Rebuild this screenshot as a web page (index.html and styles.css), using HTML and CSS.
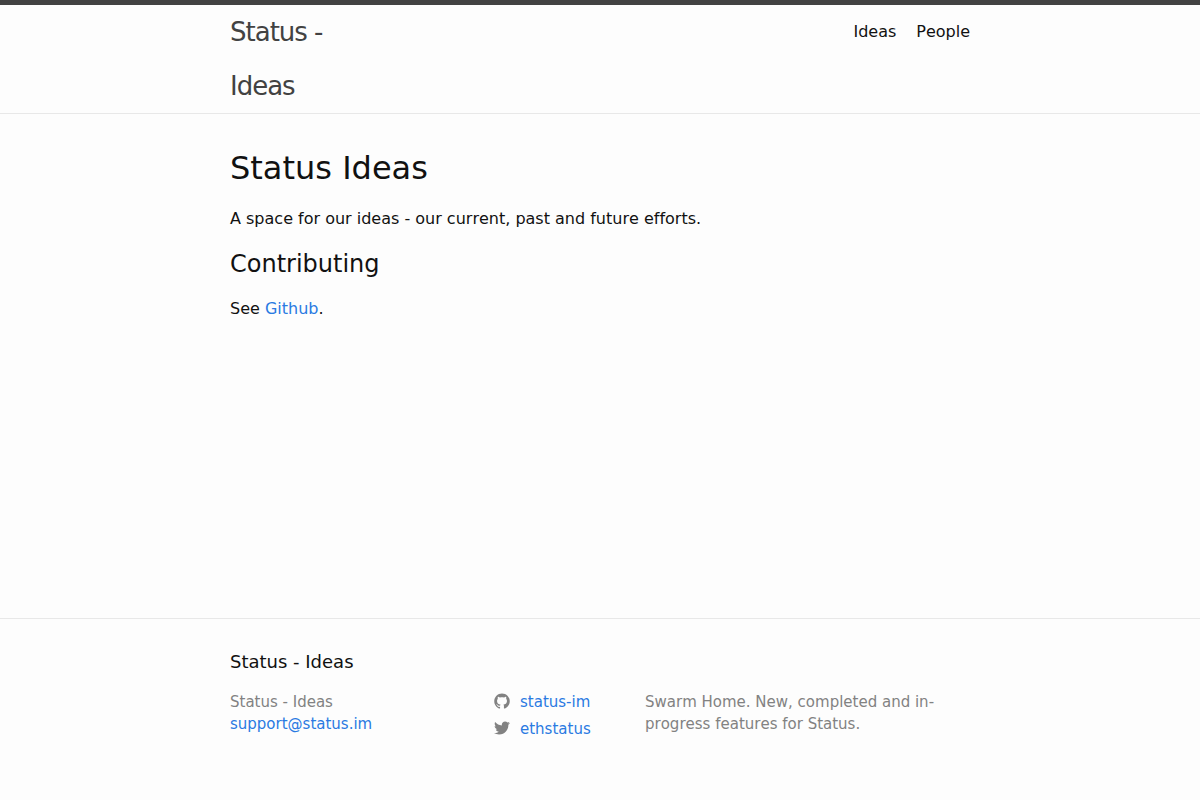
FILE: index.html
```html
<!DOCTYPE html>
<html lang="en">
<head>
<meta charset="utf-8">
<meta name="viewport" content="width=device-width, initial-scale=1">
<title>Status Ideas</title>
<link rel="stylesheet" href="styles.css">
</head>
<body>
<header class="site-header">
  <div class="wrapper header-row">
    <a class="site-title" href="#">Status -<br>Ideas</a>
    <nav class="site-nav">
      <a class="page-link" href="#ideas">Ideas</a>
      <a class="page-link" href="#people">People</a>
    </nav>
  </div>
</header>
<main class="page-content">
  <div class="wrapper">
    <h1 class="page-title">Status Ideas</h1>
    <p class="text">A space for our ideas - our current, past and future efforts.</p>
    <h2 class="section-title">Contributing</h2>
    <p class="text">See <a href="#github">Github</a>.</p>
  </div>
</main>
<footer class="site-footer">
  <div class="wrapper">
    <h2 class="footer-heading">Status - Ideas</h2>
    <div class="footer-cols">
      <ul class="contact-list">
        <li>Status - Ideas</li>
        <li><a href="mailto:support@status.im">support@status.im</a></li>
      </ul>
      <ul class="social-list">
        <li><a class="social-link" href="#status-im"><svg class="icon" viewBox="0 0 16 16" aria-hidden="true"><path d="M7.999,0.431c-4.285,0-7.76,3.474-7.76,7.761 c0,3.428,2.223,6.337,5.307,7.363c0.388,0.071,0.53-0.168,0.53-0.374c0-0.184-0.007-0.672-0.01-1.32 c-2.159,0.469-2.614-1.04-2.614-1.04c-0.353-0.896-0.862-1.135-0.862-1.135c-0.705-0.481,0.053-0.472,0.053-0.472 c0.779,0.055,1.189,0.8,1.189,0.8c0.692,1.186,1.816,0.843,2.258,0.645c0.071-0.502,0.271-0.843,0.493-1.037 C4.86,11.425,3.049,10.76,3.049,7.786c0-0.847,0.302-1.54,0.799-2.082C3.768,5.507,3.501,4.718,3.924,3.65 c0,0,0.652-0.209,2.134,0.796C6.677,4.273,7.34,4.187,8,4.184c0.659,0.003,1.323,0.089,1.943,0.261 c1.482-1.004,2.132-0.796,2.132-0.796c0.423,1.068,0.157,1.857,0.077,2.054c0.497,0.542,0.798,1.235,0.798,2.082 c0,2.981-1.814,3.637-3.543,3.829c0.279,0.24,0.527,0.713,0.527,1.437c0,1.037-0.01,1.874-0.01,2.129 c0,0.208,0.14,0.449,0.534,0.373c3.081-1.028,5.302-3.935,5.302-7.362C15.76,3.906,12.285,0.431,7.999,0.431z"/></svg>status-im</a></li>
        <li><a class="social-link" href="#ethstatus"><svg class="icon" viewBox="0 0 16 16" aria-hidden="true"><path d="M15.969,3.058c-0.586,0.26-1.217,0.436-1.878,0.515c0.675-0.405,1.194-1.045,1.438-1.809c-0.632,0.375-1.332,0.647-2.076,0.793c-0.596-0.636-1.446-1.033-2.387-1.033c-1.806,0-3.27,1.464-3.27,3.27 c0,0.256,0.029,0.506,0.085,0.745C5.163,5.404,2.753,4.102,1.14,2.124C0.859,2.607,0.698,3.168,0.698,3.767 c0,1.134,0.577,2.135,1.455,2.722C1.616,6.472,1.112,6.325,0.671,6.08c0,0.014,0,0.027,0,0.041c0,1.584,1.127,2.906,2.623,3.206 C3.02,9.402,2.731,9.442,2.433,9.442c-0.211,0-0.416-0.021-0.615-0.059c0.416,1.299,1.624,2.245,3.055,2.271 c-1.119,0.877-2.529,1.4-4.061,1.4c-0.264,0-0.524-0.015-0.78-0.046c1.447,0.928,3.166,1.469,5.013,1.469 c6.015,0,9.304-4.983,9.304-9.304c0-0.142-0.003-0.283-0.009-0.423C14.976,4.29,15.531,3.714,15.969,3.058z"/></svg>ethstatus</a></li>
      </ul>
      <p class="footer-text">Swarm Home. New, completed and in-progress features for Status.</p>
    </div>
  </div>
</footer>
</body>
</html>
```
FILE: styles.css
```css
* {
  box-sizing: border-box;
  margin: 0;
  padding: 0;
}

body {
  display: flex;
  flex-direction: column;
  min-height: 100vh;
  font: 16px/24px "DejaVu Sans", sans-serif;
  font-kerning: none;
  font-variant-ligatures: none;
  color: #111;
  background: #fdfdfd;
}

a {
  color: #2a7ae2;
  text-decoration: none;
}

a:hover {
  color: #111;
  text-decoration: underline;
}

ul {
  list-style: none;
}

.wrapper {
  width: 100%;
  max-width: 800px;
  margin: 0 auto;
  padding: 0 30px;
}

.site-header {
  border-top: 5px solid #424242;
  border-bottom: 1px solid #e8e8e8;
}

.header-row {
  display: flex;
  justify-content: space-between;
}

.site-title {
  font-size: 26px;
  line-height: 54px;
  letter-spacing: -1px;
  color: #424242;
}

.site-nav {
  display: flex;
  gap: 20px;
  line-height: 54px;
}

.page-link {
  color: #111;
}

.page-content {
  flex: 1;
  padding: 30px 0;
}

.page-title {
  margin-bottom: 15px;
  font-size: 32px;
  font-weight: 400;
  line-height: 48px;
}

.text {
  margin-bottom: 15px;
}

.section-title {
  margin-bottom: 15px;
  font-size: 24px;
  font-weight: 400;
  line-height: 36px;
}

.site-footer {
  padding: 30px 0 60px;
  border-top: 1px solid #e8e8e8;
}

.footer-heading {
  margin-bottom: 16px;
  font-size: 18px;
  font-weight: 400;
  line-height: 26px;
}

.footer-cols {
  display: grid;
  grid-template-columns: 264px 151px 1fr;
  font-size: 15px;
  line-height: 22px;
  color: #828282;
}

.social-list {
  display: grid;
  gap: 5px;
}

.social-link {
  display: flex;
  align-items: center;
  gap: 10px;
}

.icon {
  width: 16px;
  height: 16px;
  margin-bottom: 2px;
  fill: #828282;
}

.footer-text {
  padding-right: 15px;
}
```
